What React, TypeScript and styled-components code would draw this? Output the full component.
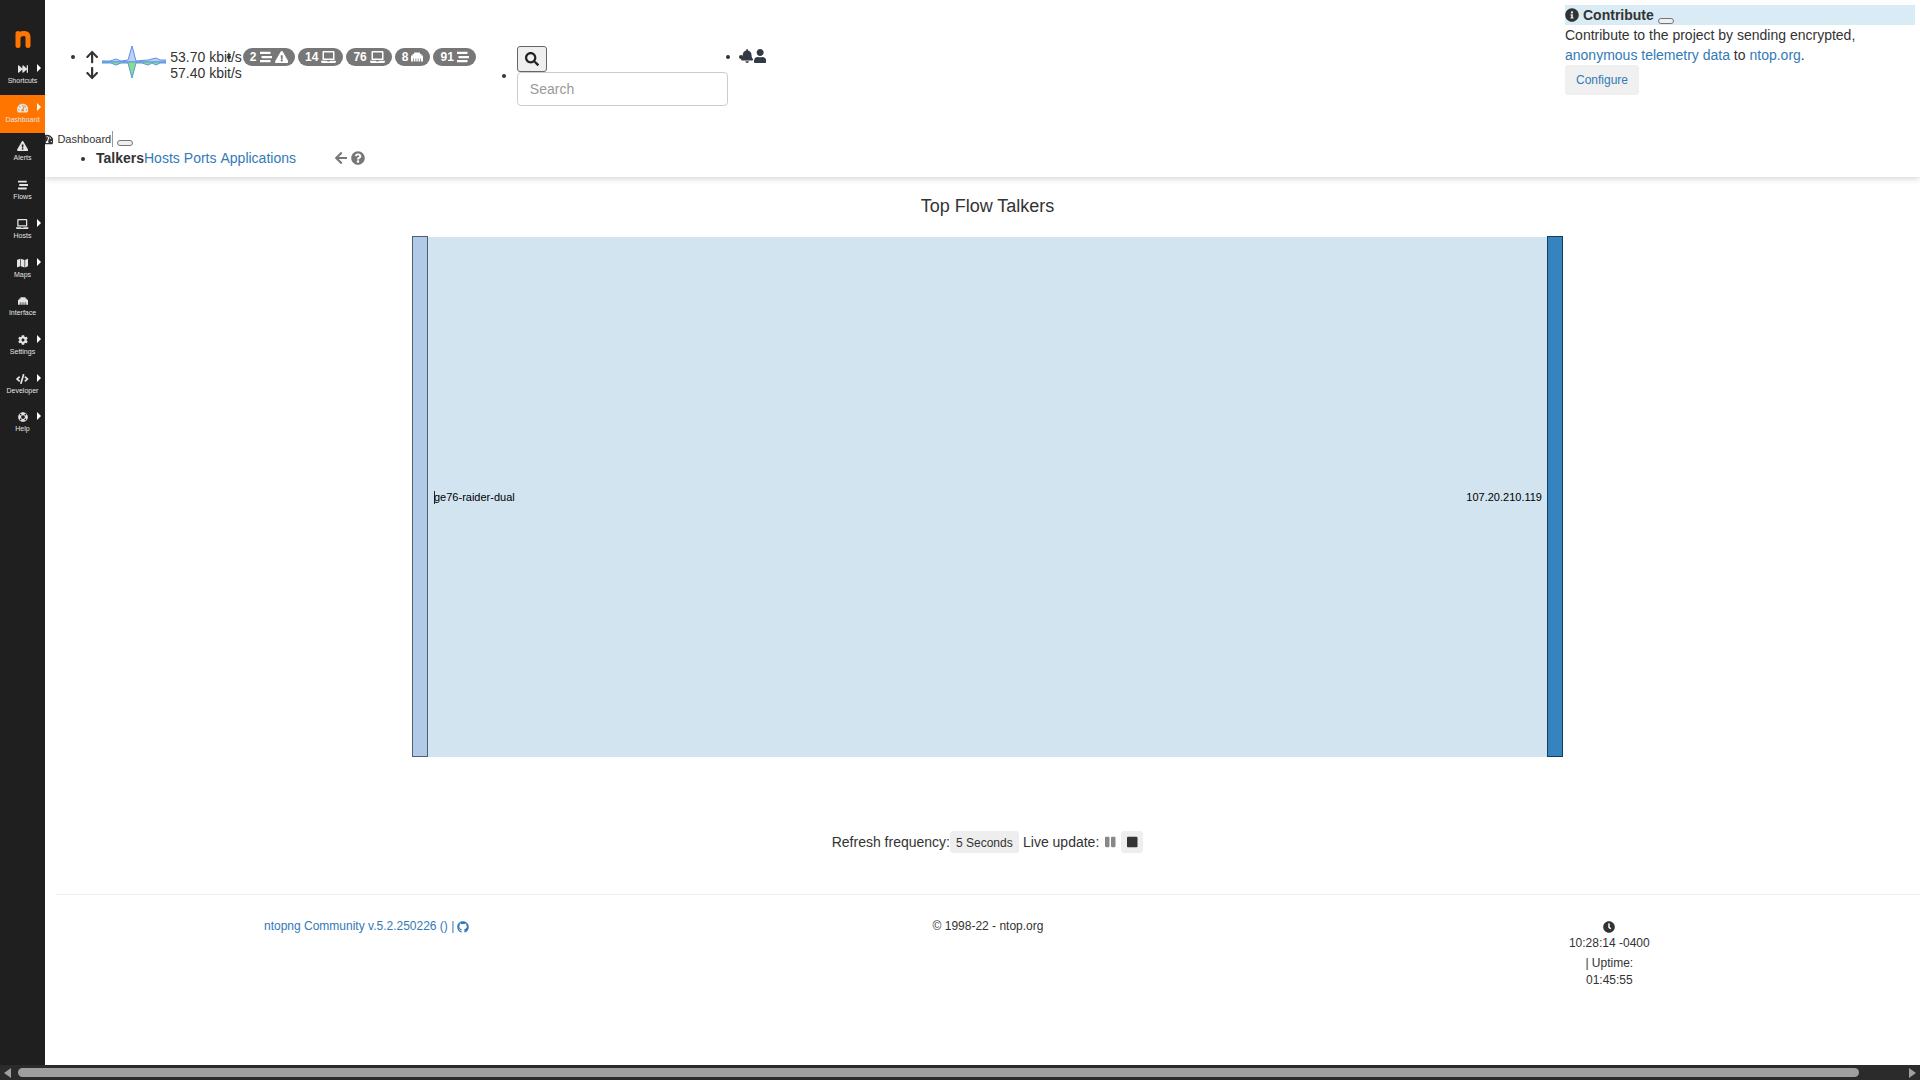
import React from 'react';
import styled, { createGlobalStyle } from 'styled-components';
import {
  FaArrowDown,
  FaArrowLeft,
  FaArrowUp,
  FaBell,
  FaClock,
  FaCode,
  FaCog,
  FaEthernet,
  FaExclamationTriangle,
  FaFastForward,
  FaGithub,
  FaInfoCircle,
  FaLaptop,
  FaLifeRing,
  FaMap,
  FaPause,
  FaQuestionCircle,
  FaSearch,
  FaStop,
  FaStream,
  FaTachometerAlt,
  FaUser,
} from 'react-icons/fa';

const GlobalStyle = createGlobalStyle`
  *, *::before, *::after { box-sizing: border-box; }
  body {
    margin: 0;
    background: #fff;
    color: #333;
    font-family: "Liberation Sans", Arial, sans-serif;
    font-size: 14px;
    line-height: 20px;
  }
  ul { list-style: none; margin: 0; padding: 0; }
  a { color: #337ab7; text-decoration: none; }
  svg { flex: none; display: block; }
  svg[viewBox="0 0 640 512"] { width: 1.25em; }
  svg[viewBox="0 0 576 512"] { width: 1.125em; }
  svg[viewBox="0 0 448 512"] { width: 0.875em; }
  button, input, select { font-family: inherit; margin: 0; }
`;

const Page = styled.div`
  min-height: 100vh;
  display: grid;
  grid-template-columns: 45px minmax(0, 1fr);
  grid-template-rows: 1fr auto;
`;

const Sidebar = styled.aside`
  background: #1f1f1f;
  color: #e4e4e4;
`;

const Brand = styled.a`
  display: flex;
  justify-content: center;
  height: 56px;
  padding-top: 30px;
`;

const SideMenu = styled.ul`
  display: grid;
  grid-auto-rows: 1fr;
  height: 387px;
`;

const SideItem = styled.li<{ $active?: boolean }>`
  background: ${(p) => (p.$active ? '#ff7500' : 'transparent')};
`;

const SideLink = styled.a`
  position: relative;
  display: flex;
  flex-direction: column;
  align-items: center;
  gap: 2px;
  padding-top: 8px;
  color: inherit;
  font-size: 7px;
  line-height: 9px;
`;

const SideIcon = styled.span`
  font-size: 10px;
`;

const SubmenuMark = styled.i`
  position: absolute;
  top: 8px;
  right: 4px;
  border-left: 4px solid #fff;
  border-top: 4px solid transparent;
  border-bottom: 4px solid transparent;
`;

const Main = styled.main`
  overflow: hidden;
`;

const Header = styled.header`
  position: relative;
  z-index: 1;
  display: flex;
  justify-content: space-between;
  align-items: flex-start;
  height: 131px;
  background: #fff;
`;

const NavList = styled.ul`
  display: flex;
  align-items: flex-start;
  padding: 46px 0 0 41px;
`;

const NavItem = styled.li<{ $centered?: boolean }>`
  display: flex;
  align-items: ${(p) => (p.$centered ? 'center' : 'flex-start')};
  &::before {
    content: "";
    flex: none;
    width: 4px;
    height: 4px;
    border-radius: 50%;
    background: #333;
    margin: ${(p) => (p.$centered ? '0 11px 0 -15px' : '9px 11px 0 -15px')};
  }
`;

const Traffic = styled.div`
  display: flex;
  align-items: flex-start;
  gap: 4px;
`;

const Rates = styled.div`
  padding-top: 3px;
  line-height: 16px;
`;

const Arrows = styled.div`
  display: grid;
  grid-auto-rows: 16px;
  align-items: center;
  padding-top: 3px;
`;

const Badges = styled.div`
  display: flex;
  gap: 3px;
  padding: 2px 41px 0 1px;
`;

const Badge = styled.a`
  display: flex;
  align-items: center;
  gap: 3px;
  height: 18px;
  padding: 0 7px;
  border-radius: 9px;
  background: #777;
  color: #fff;
  font-size: 12px;
  font-weight: bold;
`;

const SearchBox = styled.form`
  display: flex;
  flex-direction: column;
  align-items: flex-start;
  padding-right: 13px;
`;

const SearchButton = styled.button`
  display: grid;
  place-items: center;
  width: 30px;
  height: 26px;
  padding: 0;
  border: 1px solid #666;
  border-radius: 3px;
  background: #efefef;
  color: #222;
  font-size: 14px;
`;

const SearchInput = styled.input`
  width: 211px;
  height: 34px;
  padding: 6px 12px;
  border: 1px solid #ccc;
  border-radius: 4px;
  background: #fff;
  font-size: 14px;
  color: #555;
  &::placeholder { color: #999; }
`;

const IconLink = styled.a`
  display: flex;
  width: 13px;
  padding-top: 3px;
  color: #333a45;
`;

const Toast = styled.section`
  width: 350px;
  margin: 5px 5px 0 0;
`;

const ToastTitle = styled.h2`
  display: flex;
  align-items: center;
  gap: 4px;
  margin: 0;
  height: 20px;
  background: #d9ebf5;
  font-size: 14px;
  line-height: 20px;
`;

const EmptyButton = styled.button`
  align-self: flex-end;
  width: 16px;
  height: 6px;
  margin-bottom: 1px;
  padding: 0;
  border: 1px solid #767676;
  border-radius: 3px;
  background: #efefef;
`;

const ToastText = styled.p`
  margin: 0;
`;

const Configure = styled.a`
  display: inline-block;
  padding: 5px 11px;
  border-radius: 3px;
  background: #f0f0f0;
  font-size: 12px;
  line-height: 20px;
`;

const SubNav = styled.nav`
  height: 46px;
  box-shadow: 0 2px 6px rgba(0, 0, 0, 0.16);
`;

const Crumb = styled.div`
  display: flex;
  align-items: center;
  gap: 4px;
  height: 16px;
  margin-left: -4px;
  font-size: 11px;
  line-height: 16px;
`;

const CrumbText = styled.span`
  padding-right: 1px;
  border-right: 1px solid #999;
`;

const Tabs = styled.ul`
  display: flex;
  padding: 1px 0 0 51px;
`;

const TabLinks = styled.div`
  display: flex;
  gap: 4px;
`;

const TabTools = styled.div`
  display: flex;
  align-items: center;
  gap: 4px;
  height: 20px;
  margin-left: 39px;
  color: #777;
  a { color: inherit; }
`;

const Content = styled.div`
  padding-left: 10px;
`;

const Title = styled.h3`
  margin: 19px 0 20px;
  text-align: center;
  font-size: 18px;
  font-weight: normal;
  line-height: 20px;
`;

const Chart = styled.svg`
  width: 62%;
  max-width: 1152px;
  height: auto;
  margin: 0 auto;
  font-size: 11px;
`;

const Controls = styled.form`
  display: flex;
  justify-content: center;
  align-items: center;
  height: 22px;
  margin-top: 73px;
`;

const Frequency = styled.select`
  appearance: none;
  height: 22px;
  padding: 1px 6px 0;
  margin-right: 4px;
  border: 0;
  border-radius: 3px;
  background: #eee;
  color: #333;
  font-size: 12px;
`;

const ControlButton = styled.button<{ $filled?: boolean }>`
  display: grid;
  place-items: center;
  width: 22px;
  height: 22px;
  padding: 0;
  border: 0;
  border-radius: 3px;
  background: ${(p) => (p.$filled ? '#eee' : 'transparent')};
  color: ${(p) => (p.$filled ? '#333' : '#888')};
  font-size: 12px;
`;

const Footer = styled.footer`
  display: grid;
  grid-template-columns: repeat(3, 1fr);
  margin: 41px 0 0 1px;
  padding-top: 23px;
  border-top: 1px solid #eee;
  font-size: 12px;
  line-height: 17px;
  text-align: center;
`;

const FooterLink = styled.a`
  display: flex;
  justify-content: center;
  align-items: center;
  gap: 3px;
  height: 17px;
`;

const Clock = styled.div`
  display: flex;
  flex-direction: column;
  align-items: center;
`;

const Uptime = styled.span`
  width: 64px;
  margin-top: 3px;
`;

const ScrollBar = styled.div`
  grid-column: 1 / -1;
  display: grid;
  grid-template-columns: 18px 1fr 61px;
  align-items: center;
  height: 15px;
  background: #2b2b2b;
`;

const ScrollThumb = styled.div`
  height: 9px;
  border-radius: 5px;
  background: #9f9f9f;
`;

const ScrollArrow = styled.i<{ $right?: boolean }>`
  width: 7px;
  justify-self: ${(p) => (p.$right ? 'end' : 'start')};
  margin: 0 4px;
  border-top: 5px solid transparent;
  border-bottom: 5px solid transparent;
  ${(p) => (p.$right ? 'border-left' : 'border-right')}: 7px solid #9f9f9f;
`;

const menu = [
  { label: 'Shortcuts', icon: FaFastForward, sub: true },
  { label: 'Dashboard', icon: FaTachometerAlt, sub: true, active: true },
  { label: 'Alerts', icon: FaExclamationTriangle },
  { label: 'Flows', icon: FaStream },
  { label: 'Hosts', icon: FaLaptop, sub: true },
  { label: 'Maps', icon: FaMap, sub: true },
  { label: 'Interface', icon: FaEthernet },
  { label: 'Settings', icon: FaCog, sub: true },
  { label: 'Developer', icon: FaCode, sub: true },
  { label: 'Help', icon: FaLifeRing, sub: true },
];

const badges = [
  { value: 2, icons: [FaStream, FaExclamationTriangle] },
  { value: 14, icons: [FaLaptop] },
  { value: 76, icons: [FaLaptop] },
  { value: 8, icons: [FaEthernet] },
  { value: 91, icons: [FaStream] },
];

function Logo() {
  return (
    <svg width="16" height="19" viewBox="0 0 16 19" fill="none" stroke="#ff7500" strokeWidth="5" strokeLinecap="round" strokeLinejoin="round">
      <path d="M3 3.500V15.500M3 7C4.500 4 7 3.300 9.500 3.500C12 3.700 13 5 13 7.500V15.500" />
    </svg>
  );
}

function Sparkline() {
  return (
    <svg width="64" height="34" viewBox="0 0 64 34" stroke="#5b93e6" strokeWidth="1">
      <path d="M0 15L8 15L14 13L19 15L26 14L30 0L34 15L46 14L54 12L58 14L64 14V16H0Z" fill="#c3cdfa" />
      <path d="M0 16H64V17L58 17L54 19L50 17L46 19L40 17L34 17L30 32L26 17L19 17L14 19L9 17L0 17Z" fill="#86e08a" />
    </svg>
  );
}

function Sankey() {
  return (
    <Chart viewBox="0 0 1152 522" role="img" aria-label="Top Flow Talkers">
      <rect x="16" y="1" width="1120" height="520" fill="#d2e4f0" />
      <rect x="0.5" y="0.5" width="15" height="520" fill="#b3cae7" stroke="#4b5f78" />
      <rect x="1135.5" y="0.5" width="15" height="520" fill="#3584bf" stroke="#143f5c" />
      <path d="M22.500 255v13" stroke="#222" />
      <text x="22" y="265" fill="#000">ge76-raider-dual</text>
      <text x="1130" y="265" fill="#000" textAnchor="end">107.20.210.119</text>
    </Chart>
  );
}

export default function App() {
  return (
    <>
      <GlobalStyle />
      <Page>
        <Sidebar>
          <Brand href="#" aria-label="ntopng"><Logo /></Brand>
          <SideMenu>
            {menu.map(({ label, icon: Icon, sub, active }) => (
              <SideItem key={label} $active={active}>
                <SideLink href="#">
                  <SideIcon><Icon /></SideIcon>
                  {label}
                  {sub && <SubmenuMark />}
                </SideLink>
              </SideItem>
            ))}
          </SideMenu>
        </Sidebar>
        <Main>
          <Header>
            <NavList>
              <NavItem>
                <Traffic>
                  <Arrows><FaArrowUp /><FaArrowDown /></Arrows>
                  <Sparkline />
                  <Rates>53.70 kbit/s<br />57.40 kbit/s</Rates>
                </Traffic>
              </NavItem>
              <NavItem>
                <Badges>
                  {badges.map(({ value, icons }) => (
                    <Badge key={value} href="#">
                      {value}
                      {icons.map((Icon, i) => <Icon key={i} />)}
                    </Badge>
                  ))}
                </Badges>
              </NavItem>
              <NavItem $centered>
                <SearchBox>
                  <SearchButton type="button" aria-label="Search"><FaSearch /></SearchButton>
                  <SearchInput type="text" placeholder="Search" aria-label="Search" />
                </SearchBox>
              </NavItem>
              <NavItem>
                <IconLink href="#" aria-label="Notifications"><FaBell /></IconLink>
              </NavItem>
              <NavItem>
                <IconLink href="#" aria-label="User"><FaUser /></IconLink>
              </NavItem>
            </NavList>
            <Toast>
              <ToastTitle>
                <FaInfoCircle />Contribute
                <EmptyButton aria-label="Close" />
              </ToastTitle>
              <ToastText>
                Contribute to the project by sending encrypted,{' '}
                <a href="#">anonymous telemetry data</a> to <a href="#">ntop.org</a>.
              </ToastText>
              <Configure href="#">Configure</Configure>
            </Toast>
          </Header>
          <SubNav>
            <Crumb>
              <FaTachometerAlt />
              <CrumbText>Dashboard</CrumbText>
              <EmptyButton aria-label="Toggle navigation" />
            </Crumb>
            <Tabs>
              <NavItem>
                <TabLinks>
                  <span><b>Talkers</b><a href="#">Hosts</a></span>
                  <a href="#">Ports</a>
                  <a href="#">Applications</a>
                </TabLinks>
              </NavItem>
              <li>
                <TabTools>
                  <a href="#" aria-label="Back"><FaArrowLeft /></a>
                  <a href="#" aria-label="Help"><FaQuestionCircle /></a>
                </TabTools>
              </li>
            </Tabs>
          </SubNav>
          <Content>
            <Title>Top Flow Talkers</Title>
            <Sankey />
            <Controls>
              <label htmlFor="frequency">Refresh frequency:</label>
              <Frequency id="frequency"><option>5 Seconds</option></Frequency>
              <span>Live update:</span>
              <ControlButton type="button" aria-label="Pause"><FaPause /></ControlButton>
              <ControlButton type="button" aria-label="Stop" $filled><FaStop /></ControlButton>
            </Controls>
            <Footer>
              <FooterLink href="#">ntopng Community v.5.2.250226 () | <FaGithub /></FooterLink>
              <span>© 1998-22 - ntop.org</span>
              <Clock>
                <FooterLink as="span"><FaClock /></FooterLink>
                <span>10:28:14 -0400</span>
                <Uptime>| Uptime: 01:45:55</Uptime>
              </Clock>
            </Footer>
          </Content>
        </Main>
        <ScrollBar aria-hidden="true">
          <ScrollArrow />
          <ScrollThumb />
          <ScrollArrow $right />
        </ScrollBar>
      </Page>
    </>
  );
}
